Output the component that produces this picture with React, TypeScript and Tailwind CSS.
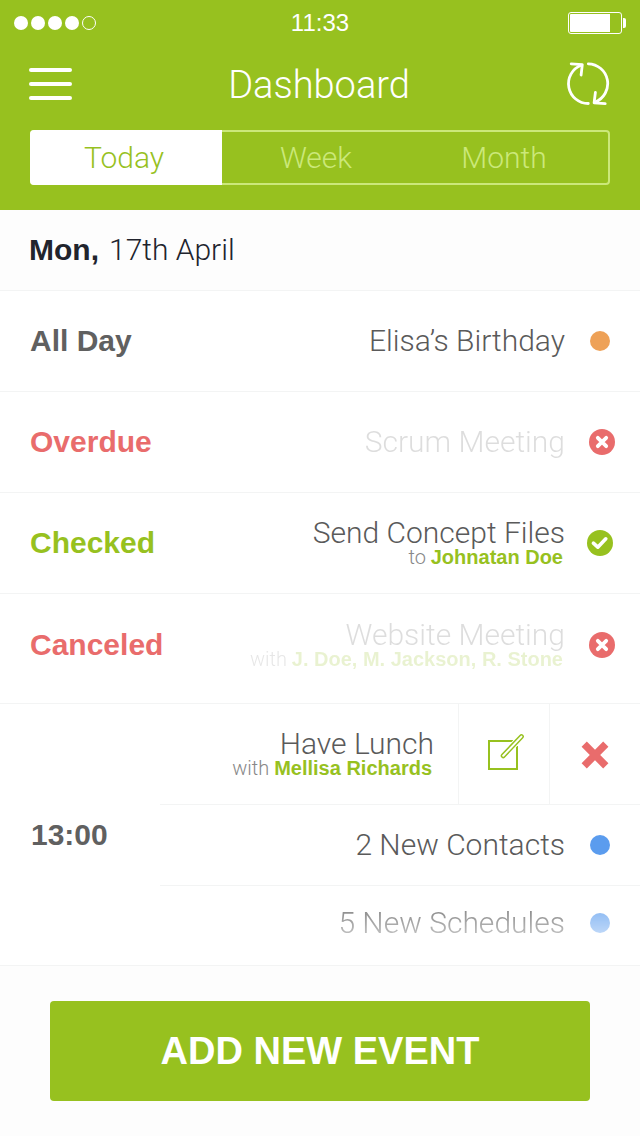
import { useState, type ReactNode } from "react";
import { clsx } from "clsx";

const light = "font-['Roboto','Liberation_Sans',sans-serif] font-light";

function StatusBar() {
  return (
    <div className="grid h-11 grid-cols-3 items-center px-3.5 pt-0.5">
      <div className="flex gap-[3px]" role="img" aria-label="Signal strength 4 of 5">
        {[1, 2, 3, 4].map((n) => (
          <span key={n} className="size-3.5 rounded-full bg-white" />
        ))}
        <span className="size-3.5 rounded-full border border-white" />
      </div>
      <time className="text-center text-2xl leading-6">11:33</time>
      <div className="flex items-center justify-end gap-px" role="img" aria-label="Battery 80%">
        <span className="flex h-[22px] w-[54px] rounded-[3px] border border-white p-px">
          <span className="w-4/5 rounded-l-[1px] bg-white" />
        </span>
        <span className="h-2.5 w-[3px] rounded-r-xs bg-white" />
      </div>
    </div>
  );
}

function RefreshIcon() {
  return (
    <svg
      viewBox="0 0 44 44"
      className="size-11"
      fill="none"
      stroke="currentColor"
      strokeWidth="2.8"
      strokeLinecap="round"
      strokeLinejoin="round"
    >
      <path d="M22.3 41.5A19.8 19.8 0 0 1 15 3.3" />
      <path d="M5.2 1.8 16.3 2.7 15.1 13" />
      <path d="M22.3 1.8A19.8 19.8 0 0 1 29.2 40" />
      <path d="M39.2 41.6 28.1 40.8 29.4 30.3" />
    </svg>
  );
}

function EditIcon() {
  return (
    <svg viewBox="-2 2 38 38" className="size-[38px] overflow-visible" fill="none">
      <path d="M26 8H2V36H30V13" stroke="#97c11f" strokeWidth="2" />
      <path d="M16.2 22.8 34.4 3.6" stroke="#fff" strokeWidth="7" strokeLinecap="round" />
      <path d="M16.2 22.8 34.4 3.6" stroke="#97c11f" strokeWidth="5" strokeLinecap="round" />
      <path d="M16.2 22.8 34.4 3.6" stroke="#fff" strokeWidth="2" strokeLinecap="round" />
    </svg>
  );
}

function CrossIcon() {
  return (
    <svg viewBox="0 -1 28 28" className="size-7 overflow-visible" stroke="#e96c6c" strokeWidth="7.4">
      <path d="M3.2 3.2 24.8 24.8M24.8 3.2 3.2 24.8" />
    </svg>
  );
}

function CrossBadge() {
  return (
    <svg viewBox="0 0 26 26" className="ml-1 size-[26px]" role="img" aria-label="Not done">
      <circle cx="13" cy="13" r="13" fill="#e96c6c" />
      <path d="M8.8 8.8 17.2 17.2M17.2 8.8 8.8 17.2" stroke="#fff" strokeWidth="3.8" strokeLinecap="round" />
    </svg>
  );
}

function CheckBadge() {
  return (
    <svg viewBox="0 0 26 26" className="size-[26px]" role="img" aria-label="Done">
      <circle cx="13" cy="13" r="13" fill="#97c11f" />
      <path
        d="M6.4 13.2 10.8 17.2 18.8 8.8"
        fill="none"
        stroke="#fff"
        strokeWidth="3.6"
        strokeLinecap="round"
        strokeLinejoin="round"
      />
    </svg>
  );
}

function Dot({ color }: { color: string }) {
  return <span className={clsx("size-5 rounded-full", color)} />;
}

type TitleProps = { title: string; prefix?: string; people?: string; faded?: boolean };

function EventTitle({ title, prefix, people, faded }: TitleProps) {
  return (
    <div className={clsx("text-right", faded && "opacity-20", people && "pb-1")}>
      <p className={clsx(light, "text-3xl leading-8 text-[#5a5a5a]")}>{title}</p>
      {people && (
        <p className="pr-0.5 text-xl leading-4">
          <span className={clsx(light, "text-[#888]")}>{prefix} </span>
          <b className="text-[#97c11f]">{people}</b>
        </p>
      )}
    </div>
  );
}

type RowProps = TitleProps & {
  label?: string;
  labelColor?: string;
  badge: ReactNode;
  className?: string;
};

function EventRow({ label, labelColor, badge, className, ...title }: RowProps) {
  return (
    <li className={clsx("flex items-center border-b border-[#f3f4f4]", className)}>
      {label && (
        <h2 className={clsx("pl-[30px] text-3xl leading-8 font-bold", labelColor)}>{label}</h2>
      )}
      <div className="ml-auto flex items-center">
        <EventTitle {...title} />
        <span className="ml-5 flex w-[30px] justify-center">{badge}</span>
      </div>
      <span className="w-[25px]" />
    </li>
  );
}

export default function App() {
  const [tab, setTab] = useState("Today");
  return (
    <div className="flex min-h-screen flex-col bg-white font-['Liberation_Sans',Arial,sans-serif]">
      <header className="bg-[#97c11f] pb-[25px] text-white">
        <StatusBar />
        <div className="flex h-[86px] items-center justify-between pr-[30px] pb-1.5 pl-[29px]">
          <button aria-label="Menu" className="flex w-[43px] flex-col gap-2.5">
            <span className="h-1 w-full rounded-full bg-white" />
            <span className="h-1 w-full rounded-full bg-white" />
            <span className="h-1 w-full rounded-full bg-white" />
          </button>
          <h1 className={clsx(light, "pt-0.5 text-[38px] leading-10")}>Dashboard</h1>
          <button aria-label="Refresh">
            <RefreshIcon />
          </button>
        </div>
        <nav className="mx-[30px] flex h-[55px] rounded border-2 border-[#cbe87a]">
          {["Today", "Week", "Month"].map((name) => (
            <button
              key={name}
              aria-pressed={tab === name}
              onClick={() => setTab(name)}
              className={clsx(
                light,
                "-my-0.5 flex-1 text-3xl first:-ml-0.5 first:rounded-l first:pr-1 last:-mr-0.5 last:rounded-r last:pr-3",
                tab === name ? "bg-white text-[#97c11f]" : "text-[#cbe87a]",
              )}
            >
              {name}
            </button>
          ))}
        </nav>
      </header>

      <main className="text-[#606060]">
        <p className="flex h-[81px] items-center border-b border-[#f3f4f4] bg-[#fdfdfd] pl-[29px] text-3xl leading-8 text-[#21242d]">
          <b>Mon,</b>
          <span className={clsx(light, "pl-2.5")}>17th April</span>
        </p>
        <ul>
          <EventRow
            className="h-[101px]"
            label="All Day"
            title="Elisa’s Birthday"
            badge={<Dot color="bg-[#eea157]" />}
          />
          <EventRow
            className="h-[101px]"
            label="Overdue"
            labelColor="text-[#e96c6c]"
            title="Scrum Meeting"
            faded
            badge={<CrossBadge />}
          />
          <EventRow
            className="h-[101px]"
            label="Checked"
            labelColor="text-[#97c11f]"
            title="Send Concept Files"
            prefix="to"
            people="Johnatan Doe"
            badge={<CheckBadge />}
          />
          <EventRow
            className="h-[110px] pb-2"
            label="Canceled"
            labelColor="text-[#e96c6c]"
            title="Website Meeting"
            prefix="with"
            people="J. Doe, M. Jackson, R. Stone"
            faded
            badge={<CrossBadge />}
          />
        </ul>

        <section className="flex border-b border-[#f3f4f4]">
          <h2 className="flex w-40 shrink-0 items-center pl-[31px] text-3xl font-bold">13:00</h2>
          <ul className="flex-1">
            <li className="flex h-[101px] border-b border-[#f3f4f4]">
              <div className="flex flex-1 items-center justify-end pr-6">
                <EventTitle title="Have Lunch" prefix="with" people="Mellisa Richards" />
              </div>
              <button
                aria-label="Edit event"
                className="flex w-[91px] items-center justify-center border-l border-[#f3f4f4]"
              >
                <EditIcon />
              </button>
              <button
                aria-label="Delete event"
                className="flex w-[91px] items-center justify-center border-l border-[#f3f4f4]"
              >
                <CrossIcon />
              </button>
            </li>
            <EventRow
              className="h-[81px]"
              title="2 New Contacts"
              badge={<Dot color="bg-[#5b9cee]" />}
            />
            <EventRow
              className="h-[79px] border-b-0 pb-1.5 [mask-image:linear-gradient(to_bottom,black,transparent)]"
              title="5 New Schedules"
              badge={<Dot color="bg-[#5b9cee]" />}
            />
          </ul>
        </section>
      </main>

      <footer className="flex-1 bg-[#fdfdfd] px-[50px] py-[35px]">
        <button className="h-[100px] w-full rounded bg-[#97c11f] text-[38px] font-bold text-white">
          ADD NEW EVENT
        </button>
      </footer>
    </div>
  );
}
